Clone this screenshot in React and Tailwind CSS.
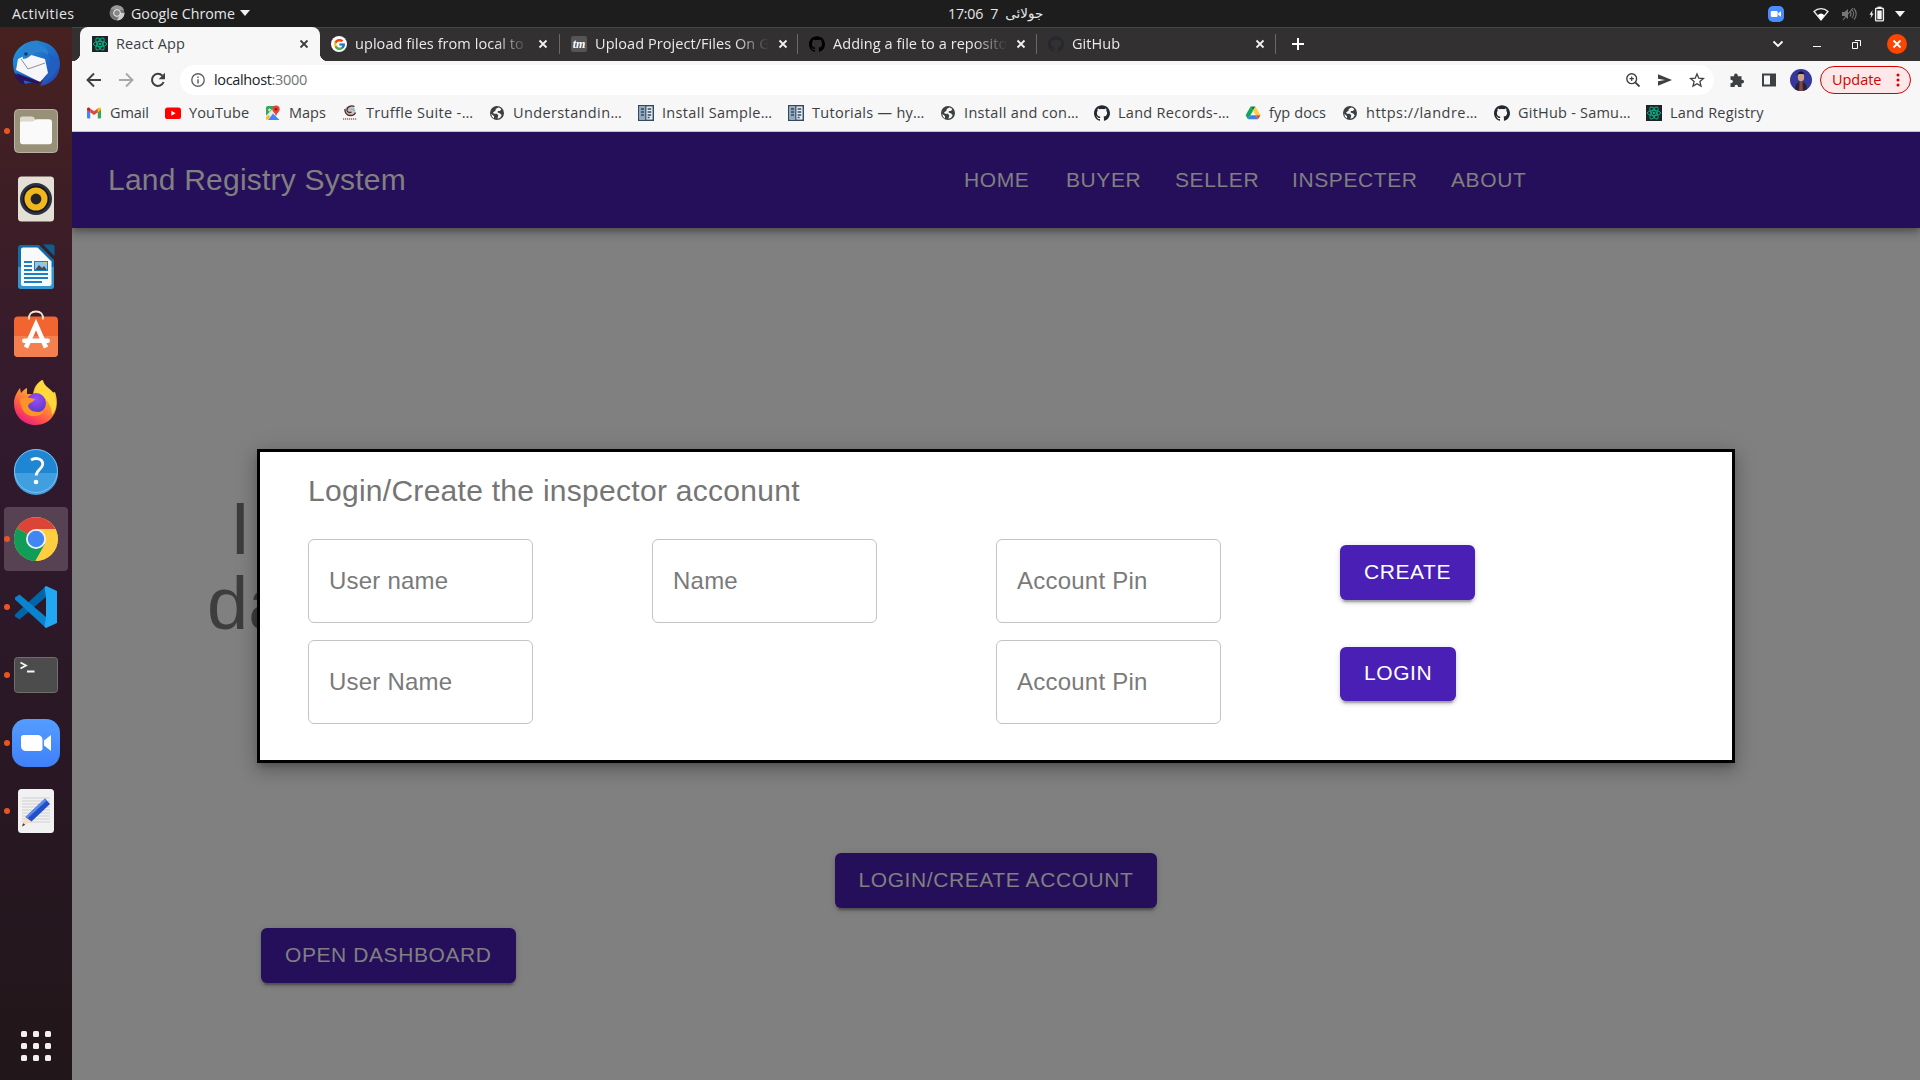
import React from "react";
import { SiGithub } from "react-icons/si";
import { FcGoogle } from "react-icons/fc";

const UI = "font-['Open_Sans','Noto_Sans',sans-serif]";

function ReactIcon() {
  return (
    <svg width="16" height="16" viewBox="0 0 16 16" className="shrink-0">
      <rect width="16" height="16" fill="#20232a" />
      <g fill="none" stroke="#06b184" strokeWidth="1">
        <ellipse cx="8" cy="8" rx="6.6" ry="2.6" />
        <ellipse cx="8" cy="8" rx="6.6" ry="2.6" transform="rotate(60 8 8)" />
        <ellipse cx="8" cy="8" rx="6.6" ry="2.6" transform="rotate(120 8 8)" />
      </g>
      <circle cx="8" cy="8" r="1.3" fill="#06b184" />
    </svg>
  );
}

function GmailIcon() {
  return (
    <svg width="16" height="16" viewBox="0 0 16 16" className="shrink-0">
      <path d="M1 4v8.6c0 .5.4.9.9.9h2.3V7.2z" fill="#4285f4" />
      <path d="M15 4v8.6c0 .5-.4.9-.9.9h-2.3V7.2z" fill="#34a853" />
      <path d="M11.8 3.4v3.8L15 4.8V3.900c0-1.300-1.400-1.900-2.400-1.200z" fill="#fbbc04" />
      <path d="M4.200 7.200V3.400L8 6.300l3.800-2.900v3.800L8 10.100z" fill="#ea4335" />
      <path d="M1 3.900v.9l3.200 2.400V3.400l-.8-.7C2.400 2 1 2.600 1 3.900z" fill="#c5221f" />
    </svg>
  );
}

function YoutubeIcon() {
  return (
    <svg width="16" height="16" viewBox="0 0 16 16" className="shrink-0">
      <rect x="0" y="2.500" width="16" height="11.500" rx="2.600" fill="#f00" />
      <path d="M6.400 5.800v4.900l4.200-2.450z" fill="#fff" />
    </svg>
  );
}

function MapsIcon() {
  return (
    <svg width="16" height="16" viewBox="0 0 16 16" className="shrink-0">
      <path d="M1 3a2 2 0 0 1 2-2h8L1 11z" fill="#34a853" />
      <path d="M1 13.500V11L11 1l3 2L2.500 15z" fill="#e8eaed" />
      <path d="M1 12.500 3.500 10 5 11.500 2 15c-.6-.2-1-.8-1-1.400z" fill="#fbbc04" />
      <path d="M8 8.500 14.500 15H3z" fill="#4285f4" />
      <path d="M11 .5a3.700 3.700 0 0 1 3.700 3.700C14.700 7 11.600 7.800 11.200 11h-.4C10.400 7.800 7.300 7 7.300 4.200A3.700 3.700 0 0 1 11 .5z" fill="#ea4335" />
      <circle cx="11" cy="4.200" r="1.300" fill="#8c1a12" />
      <path d="M6.200 4.500H4.500v1h.7c-.2.700-1.600.7-1.700-.5 0-1.100 1.100-1.300 1.600-.8" fill="none" stroke="#fff" strokeWidth=".8" />
    </svg>
  );
}

function TruffleIcon() {
  return (
    <svg width="16" height="16" viewBox="0 0 16 16" className="shrink-0">
      <circle cx="8" cy="5.800" r="5.400" fill="#cfc4c4" />
      <path d="M12.500 1.500C9 0 4.500 2 5 5.500c.3 2 3 2.500 4.500 1.500M3 4c-.5 3.500 2 6.500 5.500 6.500s4.500-1.500 5-3" fill="none" stroke="#4a2a2a" strokeWidth="1.300" />
      <path d="M8 4.500c1.500-1 4-.5 4.200 1.500" fill="none" stroke="#5fc9c0" strokeWidth="1.200" />
      <path d="M1 14h14" stroke="#a98a8e" strokeWidth="2" strokeDasharray="1.200 .8" />
    </svg>
  );
}

function GlobeIcon() {
  return (
    <svg width="16" height="16" viewBox="0 0 16 16" className="shrink-0">
      <circle cx="8" cy="8" r="7" fill="#3c4043" />
      <path d="M9.200 2.400 6.800 3.900 6.400 5.700 4 7.400l1 1.400h3l1.300 1.600-.9 3.300 2.700-.9 1.600-2.600-1.500-1.700L8.600 7.600l.3-1.500h1.900l1.500-1.600-1.200-1.400z" fill="#f7f7f7" />
      <path d="M2.300 8.800 5 11.200v2.200L3 11.800z" fill="#f7f7f7" />
    </svg>
  );
}

function DocsIcon() {
  return (
    <svg width="16" height="16" viewBox="0 0 16 16" className="shrink-0">
      <rect x=".7" y=".7" width="14.600" height="14.600" fill="#dfe9f0" stroke="#34495e" strokeWidth="1.400" />
      <rect x="1.400" y="1.400" width="6" height="13.200" fill="#8fa9bd" />
      <path d="M7.800 1v14" stroke="#34495e" strokeWidth="1.200" />
      <path d="M3 4h3M3 7h3M3 10h3M9.600 4h3.600M9.600 7h3.600M9.600 10h3.600M9.600 12.500h2" stroke="#34495e" strokeWidth="1.300" />
    </svg>
  );
}

function DriveIcon() {
  return (
    <svg width="16" height="16" viewBox="0 0 16 16" className="shrink-0">
      <path d="M5.600 1.500h4.800L8 5.700z" fill="#0d8038" />
      <path d="M5.600 1.500 .6 10.300 3 14.300 8 5.700z" fill="#0fa858" />
      <path d="M10.400 1.500 8 5.700l2.700 4.600h4.800z" fill="#ffcf3f" />
      <path d="M5.300 10.300h5.400L13 14.300H3z" fill="#3f7ee8" />
      <path d="M10.700 10.300h4.800L13 14.300z" fill="#ea4335" />
    </svg>
  );
}

function TmIcon() {
  return (
    <span className="flex h-4 w-4 shrink-0 items-center justify-center rounded-[2px] bg-[#555] font-['Liberation_Serif',serif] text-[12px] leading-none font-bold text-white italic">
      tm
    </span>
  );
}

function CloseX({ className }) {
  return (
    <svg width="10" height="10" viewBox="0 0 10 10" className={className}>
      <path d="M1.500 1.500l7 7M8.500 1.500l-7 7" stroke="currentColor" strokeWidth="1.800" />
    </svg>
  );
}

function Tab({ icon, title, cls }) {
  return (
    <div className={"relative -mt-px flex h-[34px] shrink-0 items-center pl-[11px] " + cls}>
      {icon}
      <span className="ml-2 w-[174px] overflow-hidden [mask-image:linear-gradient(to_right,#000_140px,transparent_174px)] text-[14.5px] tracking-[0.06px] whitespace-nowrap text-[#e8eaed]">
        {title}
      </span>
      <CloseX className="ml-[9px] shrink-0 text-[#f1f1f1]" />
      <i className="absolute top-[7px] right-0 h-5 w-px bg-[#6b6869]" />
    </div>
  );
}

const bookmarks = [
  ["Gmail", <GmailIcon />, "w-[79px]", "tracking-[-0.1px]"],
  ["YouTube", <YoutubeIcon />, "w-[100px]", "tracking-[0.1px]"],
  ["Maps", <MapsIcon />, "w-[77px]", ""],
  ["Truffle Suite -…", <TruffleIcon />, "w-[147px]", "tracking-[0.35px]"],
  ["Understandin…", <GlobeIcon />, "w-[149px]", "tracking-[0.38px]"],
  ["Install Sample…", <DocsIcon />, "w-[150px]", "tracking-[0.32px]"],
  ["Tutorials — hy…", <DocsIcon />, "w-[152px]", "tracking-[0.28px]"],
  ["Install and con…", <GlobeIcon />, "w-[154px]", "tracking-[0.33px]"],
  ["Land Records-…", <SiGithub size={16} color="#24292f" className="shrink-0" />, "w-[151px]", "tracking-[0.28px]"],
  ["fyp docs", <DriveIcon />, "w-[97px]", "tracking-[0.1px]"],
  ["https://landre…", <GlobeIcon />, "w-[152px]", "tracking-[0.5px]"],
  ["GitHub - Samu…", <SiGithub size={16} color="#24292f" className="shrink-0" />, "w-[152px]", "tracking-[0.22px]"],
  ["Land Registry", <ReactIcon />, "w-[130px]", "tracking-[0.2px]"],
];

function TopBar() {
  return (
    <div className="flex h-[27px] shrink-0 items-center bg-[#1d1d1d] text-[14.2px] text-[#e6e6e6]">
      <div className="flex w-[948px] items-center pl-3">
        <span className="w-[97px] tracking-[0.4px]">Activities</span>
        <svg width="16" height="16" viewBox="0 0 16 16">
          <circle cx="8" cy="8" r="7.500" fill="#777" />
          <path d="M8 8h7.500A7.500 7.500 0 0 1 8 15.500L11 9z" fill="#ccc" />
          <path d="M1.500 4A7.500 7.500 0 0 1 15 5H8z" fill="#999" />
          <circle cx="8" cy="8" r="3.400" fill="#888" stroke="#eee" strokeWidth="1" />
        </svg>
        <span className="ml-1.5 w-[109px] tracking-[0.05px] whitespace-nowrap">Google Chrome</span>
        <svg width="10" height="6" viewBox="0 0 10 6">
          <path d="M0 0h10L5 6z" fill="#f2f2f2" />
        </svg>
      </div>
      <div className="flex w-[820px] items-center gap-[7px] whitespace-nowrap">
        <span className="tracking-[-0.2px]">17:06</span>
        <span>7</span>
        <span dir="rtl" className="font-['DejaVu_Sans',sans-serif] text-[13.5px]">جولائی</span>
      </div>
      <div className="flex items-center">
        <svg width="16" height="16" viewBox="0 0 16 16">
          <rect width="16" height="16" rx="5" fill="#4a8cff" />
          <rect x="2.800" y="5" width="6.800" height="6" rx="1.200" fill="#fff" />
          <path d="M10.200 7.300 13 5.200v5.600l-2.800-2.100z" fill="#fff" />
        </svg>
        <svg width="16" height="14" viewBox="0 0 16 14" className="ml-[29px]">
          <path d="M1 4.500a10 10 0 0 1 14 0L8 13z" fill="none" stroke="#eee" strokeWidth="1.300" />
          <path d="M4.600 8.200a5 5 0 0 1 6.800 0L8 13z" fill="#fff" />
        </svg>
        <svg width="16" height="14" viewBox="0 0 16 14" className="ml-3">
          <path d="M1 5h2.500L7 2v10L3.500 9H1z" fill="#777" />
          <path d="M9 4.500a4 4 0 0 1 0 5M11 3a6 6 0 0 1 0 8M13 1.500a8 8 0 0 1 0 11M2 13 12 1" fill="none" stroke="#777" strokeWidth="1.100" />
        </svg>
        <svg width="16" height="16" viewBox="0 0 16 16" className="ml-3">
          <path d="M3.600 4 .5 8.700h1.800L1.500 12.500 4.600 7.600H2.900z" fill="#f2f2f2" />
          <rect x="6.600" y="2.300" width="7.800" height="12.600" rx="1" fill="none" stroke="#f2f2f2" strokeWidth="1.400" />
          <rect x="8.600" y=".6" width="3.800" height="1.600" fill="#f2f2f2" />
          <rect x="8.300" y="4.500" width="4.400" height="8.800" fill="#f2f2f2" />
        </svg>
        <svg width="10" height="6" viewBox="0 0 10 6" className="ml-[10px]">
          <path d="M0 0h10L5 6z" fill="#f2f2f2" />
        </svg>
      </div>
    </div>
  );
}

function Thunderbird() {
  return (
    <svg width="48" height="48" viewBox="0 0 48 48">
      <defs>
        <linearGradient id="tb" x1="0" y1="0" x2="1" y2="1">
          <stop offset="0" stopColor="#1f9be0" />
          <stop offset=".6" stopColor="#1f66c4" />
          <stop offset="1" stopColor="#2b3fae" />
        </linearGradient>
      </defs>
      <path d="M1 20C4 9 13 2 24 2c13 0 24 9 24 23 0 12-8 20-20 22l3-6L12 45C5 41 0 32 1 20z" fill="url(#tb)" />
      <path d="M2 34c1 5 5 10 11 12l-2-7z" fill="#2a1460" />
      <path d="M4 31 6 20l10-5 17 5 3 14-8 9z" fill="#f6f6f8" />
      <path d="m9 20 7 10 17-6" fill="none" stroke="#8f9096" strokeWidth="1" />
      <path d="M4 34l24 9-2 2-16-4z" fill="#2a1460" />
      <path d="M10 12C13 4 21 0 28 2l-5 3c8 0 14 5 13 11-5-4-10-4-15-1-4 2-5 5-10 5z" fill="#2a82cf" />
      <path d="M36 14c5 8 4 18-6 29 6-1 16-8 17-20z" fill="#1f5fc0" />
      <circle cx="14" cy="15" r="1.800" fill="#123a66" />
    </svg>
  );
}

function FilesIcon() {
  return (
    <svg width="48" height="48" viewBox="0 0 48 48">
      <rect x="2.500" y="2.500" width="43" height="43" rx="4" fill="#989079" stroke="#b9b3a2" strokeWidth="1" />
      <path d="M8 12c0-1.700 1-2.500 2.500-2.500h9c2 0 3 .8 3.700 3.200H36V18H8z" fill="#ddd9cd" />
      <path d="M8 16.500c0-1.300.8-2 2-2h10.500c2 0 2.500-2.200 4.500-2.200h12c1.800 0 3 1 3 2.700v19.500c0 1.700-1 2.700-2.700 2.700H10.700C9 37.200 8 36.200 8 34.500z" fill="#fafafa" />
    </svg>
  );
}

function RhythmboxIcon() {
  return (
    <svg width="48" height="48" viewBox="0 0 48 48">
      <rect x="6" y="1.500" width="36" height="45" rx="3.500" fill="#e4e0d6" />
      <circle cx="24" cy="24" r="16" fill="#2c3040" />
      <circle cx="24" cy="24" r="13.200" fill="#15171c" />
      <circle cx="24" cy="24" r="11.500" fill="#f0b81c" />
      <circle cx="24" cy="24" r="5.400" fill="#24262a" />
    </svg>
  );
}

function WriterIcon() {
  return (
    <svg width="48" height="48" viewBox="0 0 48 48">
      <path d="M9 2h18l15 15v26a3 3 0 0 1-3 3H9a3 3 0 0 1-3-3V5a3 3 0 0 1 3-3z" fill="#0f6ea6" />
      <path d="M6 24h36v19a3 3 0 0 1-3 3H9a3 3 0 0 1-3-3z" fill="#3596cf" />
      <path d="M31 1.500h9.500a2 2 0 0 1 2 2V13z" fill="#0c5f92" />
      <path d="M11 4.500h14.500L39.500 18.500V41a2 2 0 0 1-2 2H11a2 2 0 0 1-2-2V6.500a2 2 0 0 1 2-2z" fill="#f8f9fa" />
      <path d="M12 19h8M12 23h8M12 27h8M12 31h24M12 35h24M12 39h18" stroke="#1b7fc0" strokeWidth="2" />
      <rect x="22.500" y="18.500" width="13" height="9" fill="#8fc7ea" stroke="#1b7fc0" />
      <path d="m23 27 4-5 3 3 2-2 3 4z" fill="#4a4a4a" />
      <path d="M32 19h3v3z" fill="#f6c52c" />
    </svg>
  );
}

function SoftwareIcon() {
  return (
    <svg width="48" height="48" viewBox="0 0 48 48" className="overflow-visible">
      <path d="M2 9.500a4 4 0 0 1 4-4h36a4 4 0 0 1 4 4V42a4 4 0 0 1-4 4H6a4 4 0 0 1-4-4z" fill="#f26430" />
      <path d="M2 25h44v17a4 4 0 0 1-4 4H6a4 4 0 0 1-4-4z" fill="#f4804f" />
      <path d="M17 8.500C16.500 3 19.500.5 24 .5S31.500 3 31 8.500" fill="none" stroke="#fbe3c4" strokeWidth="1.800" />
      <path d="M14 36.500 24 13.500l10 23" fill="none" stroke="#fff" strokeWidth="4.600" />
      <rect x="10" y="27.500" width="28" height="4.600" rx="2.300" fill="#fff" />
    </svg>
  );
}

function FirefoxIcon() {
  return (
    <svg width="48" height="48" viewBox="0 0 48 48">
      <defs>
        <linearGradient id="ff" x1=".8" y1="0" x2=".2" y2="1">
          <stop offset="0" stopColor="#fff04a" />
          <stop offset=".4" stopColor="#ffa02e" />
          <stop offset=".75" stopColor="#ff4a50" />
          <stop offset="1" stopColor="#e3158c" />
        </linearGradient>
        <radialGradient id="fp" cx=".5" cy=".3" r=".7">
          <stop offset="0" stopColor="#9a4dff" />
          <stop offset="1" stopColor="#5a3cc0" />
        </radialGradient>
      </defs>
      <path d="M2 24c0-6 3-11 6-15l1 5c2-2 3-4 6-5l0 6h6c1-7 4-11 9-14 1 7 9 9 10 13l3-1c6 17-3 33-19 33C12 46 2 38 2 24z" fill="url(#ff)" />
      <path d="M22 14c2-7 5-11 9-13 1 7 9 9 11 14 3 8 3 14-2 21 0-10-5-18-18-22z" fill="#ffd83d" />
      <circle cx="24" cy="24" r="10" fill="url(#fp)" />
      <path d="M8 20c5-2 9-1 15 0-2 4-6 3-7 7 2 6 9 7 16 5-3 6-13 7-19 2-3-3-5-9-5-14z" fill="#ff9328" />
    </svg>
  );
}

function HelpIcon() {
  return (
    <svg width="48" height="48" viewBox="0 0 48 48">
      <circle cx="24" cy="24" r="22" fill="#1f86d4" />
      <path d="M2 26a22 22 0 0 0 44 0z" fill="#419fdf" />
      <circle cx="24" cy="24" r="21.500" fill="none" stroke="#7cc0ee" strokeWidth="1" />
      <path d="M19 13c4-2.500 12-2.200 11.700 4.300-.3 5-6.500 5.700-6.500 11.200" fill="none" stroke="#fff" strokeWidth="2.800" />
      <circle cx="24" cy="35" r="2.300" fill="#fff" />
    </svg>
  );
}

function ChromeIcon() {
  return (
    <svg width="48" height="48" viewBox="0 0 48 48">
      <circle cx="24" cy="24" r="22" fill="#fc4" />
      <path d="M24 24 5 13A22 22 0 0 1 43.300 14H24z" fill="#db4437" />
      <path d="M24 24 5 12.900A22 22 0 0 0 23.500 46L33 29z" fill="#0f9d58" />
      <path d="M24 14h19.300A22 22 0 0 1 23.500 46L33 29z" fill="#ffcd40" />
      <circle cx="24" cy="24" r="10" fill="#f1f1f1" />
      <circle cx="24" cy="24" r="8.200" fill="#4285f4" />
    </svg>
  );
}

function CodeIcon() {
  return (
    <svg width="48" height="48" viewBox="0 0 48 48">
      <path d="M3 31.500 34 3v11L7.500 36.500 3 33.500z" fill="#0065a9" />
      <path d="M3 16.500 34 45V34L7.500 11.500 3 14.500z" fill="#0a84cf" />
      <path d="M34 3l11 5v32l-11 5-1.500-1.500L34 34V14l-1.500-9.500z" fill="#23a7f2" />
    </svg>
  );
}

function TerminalIcon() {
  return (
    <svg width="48" height="48" viewBox="0 0 48 48">
      <rect x="2.500" y="6.500" width="43" height="35" rx="3" fill="#4c4c4c" stroke="#6f6f6f" />
      <path d="m8.500 11.500 5.500 3-5.500 3M15 20.500h7.500" fill="none" stroke="#f5f5f5" strokeWidth="1.800" />
    </svg>
  );
}

function ZoomIcon() {
  return (
    <svg width="48" height="48" viewBox="0 0 48 48">
      <defs>
        <linearGradient id="zm" x1="0" y1="0" x2="0" y2="1">
          <stop offset="0" stopColor="#559dff" />
          <stop offset="1" stopColor="#3f80fa" />
        </linearGradient>
      </defs>
      <rect width="48" height="48" rx="14" fill="url(#zm)" />
      <path d="M9 18.500C9 17 10 16 11.500 16H25c3.500 0 5.500 2 5.500 5v8.500c0 1.500-1 2.500-2.500 2.500H14.500c-3.500 0-5.500-2-5.500-5z" fill="#fff" />
      <path d="M32 21.500 39 16v16l-7-5.500z" fill="#fff" />
    </svg>
  );
}

function EditorIcon() {
  return (
    <svg width="48" height="48" viewBox="0 0 48 48">
      <rect x="6" y="2" width="36" height="44" rx="3.500" fill="#f1f1f1" />
      <path d="M10 11h28M10 14h28M10 17h28M10 20h28M10 23h28M10 26h28M10 29h28M10 32h28M10 35h28" stroke="#cfcfcf" strokeWidth="1" />
      <path d="M10 39.500 13.500 30l6 4.500z" fill="#fbdcc0" />
      <path d="m10 39.500 1.200-3.300 2 1.500z" fill="#333" />
      <path d="M13.500 30 33 11.500l5 5.500-18.500 17.500z" fill="#234fc4" />
      <path d="m13.500 30 19.500-18.500 1.800 1.900-19.500 18z" fill="#5b8af0" />
    </svg>
  );
}

const dock = [
  [<Thunderbird />, false],
  [<FilesIcon />, true],
  [<RhythmboxIcon />, false],
  [<WriterIcon />, false],
  [<SoftwareIcon />, false],
  [<FirefoxIcon />, false],
  [<HelpIcon />, false],
  [<ChromeIcon />, true, true],
  [<CodeIcon />, true],
  [<TerminalIcon />, true],
  [<ZoomIcon />, true],
  [<EditorIcon />, true],
];

function Dock() {
  return (
    <div className="flex w-[72px] shrink-0 flex-col items-center gap-1 bg-linear-to-b from-[#47211f] via-[#31192e] via-40% to-[#211619] pt-1">
      {dock.map(([icon, running, active], i) => (
        <div
          key={i}
          className={
            "relative flex h-16 w-16 shrink-0 items-center justify-center rounded-[4px] " +
            (active ? "bg-[#564252]" : "")
          }
        >
          {running && <i className="absolute top-[29px] left-0 h-1.5 w-1.5 rounded-full bg-[#e95420]" />}
          {icon}
        </div>
      ))}
      <div className="mt-auto mb-[19px] grid grid-cols-3 gap-1.5">
        {[0, 1, 2, 3, 4, 5, 6, 7, 8].map((n) => (
          <i key={n} className="h-1.5 w-1.5 rounded-[1.5px] bg-[#f2f0ee]" />
        ))}
      </div>
    </div>
  );
}

function TabStrip() {
  return (
    <div className="flex h-[34px] shrink-0 items-center border-t border-[#484647] bg-[#333031] pl-2">
      <div className="relative -mt-px flex h-[34px] w-[240px] shrink-0 items-center rounded-t-lg bg-[#f7f7f7] pl-3">
        <i className="absolute bottom-0 -left-2 h-2 w-2 bg-[radial-gradient(circle_at_0_0,transparent_8px,#f7f7f7_8.500px)]" />
        <i className="absolute -right-2 bottom-0 h-2 w-2 bg-[radial-gradient(circle_at_100%_0,transparent_8px,#f7f7f7_8.500px)]" />
        <ReactIcon />
        <span className="ml-2 w-[183px] text-[14.5px] tracking-[0.12px] text-[#3c4043]">React App</span>
        <CloseX className="shrink-0 text-[#3c4043]" />
      </div>
      <Tab
        cls="w-[240px]"
        icon={
          <span className="flex h-4 w-4 shrink-0 items-center justify-center rounded-full bg-white">
            <FcGoogle size={13} />
          </span>
        }
        title="upload files from local to gith"
      />
      <Tab cls="w-[238px]" icon={<TmIcon />} title="Upload Project/Files On Gith" />
      <Tab cls="w-[239px]" icon={<SiGithub size={16} color="#000" className="shrink-0" />} title="Adding a file to a repository" />
      <Tab cls="w-[239px]" icon={<SiGithub size={16} color="#24292f" className="shrink-0" />} title="GitHub" />
      <svg width="12" height="12" viewBox="0 0 12 12" className="-mt-px ml-4">
        <path d="M6 0v12M0 6h12" stroke="#fff" strokeWidth="2" />
      </svg>
      <div className="-mt-px mr-[13px] ml-auto flex items-center">
        <svg width="12" height="8" viewBox="0 0 12 8" className="mr-[29px]">
          <path d="m1.500 1.500 4.500 4.500 4.500-4.500" fill="none" stroke="#fff" strokeWidth="1.800" />
        </svg>
        <i className="mt-[5px] mr-8 h-px w-2 bg-white" />
        <svg width="9" height="9" viewBox="0 0 9 9" className="mr-[26px] -ml-px">
          <path d="M.5 2.500h5v6h-5zM3 .5h5.500v5.500" fill="none" stroke="#fff" strokeWidth="1" />
        </svg>
        <span className="flex h-5 w-5 items-center justify-center rounded-full bg-[#fc4600]">
          <CloseX className="text-white" />
        </span>
      </div>
    </div>
  );
}

function Toolbar() {
  return (
    <div className="flex h-[38px] shrink-0 items-center bg-[#f7f7f7] pl-[14px]">
      <svg width="16" height="16" viewBox="0 0 16 16">
        <path d="M15 8H2M8 1.500 1.500 8 8 14.500" fill="none" stroke="#3c4043" strokeWidth="1.900" />
      </svg>
      <svg width="16" height="16" viewBox="0 0 16 16" className="ml-4">
        <path d="M1 8h13M8 1.500 14.500 8 8 14.500" fill="none" stroke="#a8a8aa" strokeWidth="1.900" />
      </svg>
      <svg width="16" height="16" viewBox="0 0 16 16" className="ml-4">
        <path d="M13.600 10a6 6 0 1 1-1.200-6.200" fill="none" stroke="#3c4043" strokeWidth="2" />
        <path d="M15 .8v6.400H8.600z" fill="#3c4043" />
      </svg>
      <div className="ml-[14px] flex h-[30px] w-[1534px] shrink-0 items-center rounded-full bg-white pl-[11px]">
        <svg width="14" height="14" viewBox="0 0 14 14">
          <circle cx="7" cy="7" r="6.200" fill="none" stroke="#5f6368" strokeWidth="1.400" />
          <path d="M7 6.200v4.300M7 3.400v1.600" stroke="#5f6368" strokeWidth="1.500" />
        </svg>
        <span className="ml-[9px] text-[14.5px] tracking-[-0.35px] text-[#202124]">
          localhost<span className="text-[#6f7377]">:3000</span>
        </span>
        <svg width="16" height="16" viewBox="0 0 16 16" className="ml-auto">
          <circle cx="6.700" cy="6.700" r="4.900" fill="none" stroke="#3c4043" strokeWidth="1.400" />
          <path d="M10.300 10.300 14.500 14.500" stroke="#3c4043" strokeWidth="1.800" />
          <path d="M6.700 4.500v4.400M4.500 6.700h4.400" stroke="#3c4043" strokeWidth="1.200" />
        </svg>
        <svg width="16" height="16" viewBox="0 0 16 16" className="ml-4">
          <path d="M1 2.200 15 8 1 13.800V9.300L8 8 1 6.700z" fill="#3c4043" />
        </svg>
        <svg width="16" height="16" viewBox="0 0 16 16" className="mr-[9px] ml-4">
          <path d="m8 2 1.800 4.200 4.600.4-3.500 3 1.100 4.500L8 11.700l-4 2.400 1.100-4.500-3.500-3 4.600-.4z" fill="none" stroke="#3c4043" strokeWidth="1.300" />
        </svg>
      </div>
      <svg width="16" height="16" viewBox="0 0 16 16" className="ml-[15px]">
        <path d="M1.500 4.200h3.600c-.6-3.600 4.200-3.600 3.700 0h3.700v3.600c3.400-.5 3.400 4.200 0 3.700v3.500H9c.3-3-3.600-3-3.400 0H1.500v-3.800c3.200 0 3.200-3.600 0-3.500z" fill="#3c4043" />
      </svg>
      <svg width="16" height="16" viewBox="0 0 16 16" className="ml-4">
        <path d="M1 1.500h14v13H1zM3 3.500v9h6v-9z" fill="#3c4043" fillRule="evenodd" />
      </svg>
      <svg width="22" height="22" viewBox="0 0 22 22" className="ml-[13px] rounded-full">
        <rect width="22" height="22" fill="#34389a" />
        <path d="M5 22c0-7 2-9 6-9s6 2 6 9z" fill="#2a2030" />
        <path d="M9.500 13h3l.5 9H9z" fill="#7c4a43" />
        <ellipse cx="11" cy="8" rx="3.200" ry="4.400" fill="#d0a08c" />
        <path d="M7.500 6.500c0-5.500 7-5.500 7 0l-1-1.500H8.800z" fill="#17141c" />
      </svg>
      <div className="ml-2 flex h-7 w-[91px] items-center rounded-full border border-[#d40000] bg-[#fce8e8] pl-[11px] text-[14.5px] text-[#d40000]">
        <span className="w-[64px] tracking-[-0.05px]">Update</span>
        <svg width="4" height="14" viewBox="0 0 4 14">
          <circle cx="2" cy="2" r="1.500" fill="#d40000" />
          <circle cx="2" cy="7" r="1.500" fill="#d40000" />
          <circle cx="2" cy="12" r="1.500" fill="#d40000" />
        </svg>
      </div>
    </div>
  );
}

function Bookmarks() {
  return (
    <div className="flex h-[33px] shrink-0 border-b border-[#c3c1c9] bg-[#f7f7f7] pb-1 pl-[14px]">
      {bookmarks.map(([label, icon, w, tr]) => (
        <div key={label} className={"flex shrink-0 items-center gap-2 text-[14.5px] whitespace-nowrap text-[#3c4043] " + w + " " + tr}>
          {icon}
          {label}
        </div>
      ))}
    </div>
  );
}

const btn =
  "flex h-[55px] items-center rounded-[6px] px-6 pb-0.5 text-[21px] tracking-[0.58px] whitespace-nowrap shadow-[0_4.5px_1.5px_-3px_rgba(0,0,0,0.2),0_3px_3px_rgba(0,0,0,0.14),0_1.5px_7.500px_rgba(0,0,0,0.12)] ";

function Field({ label }) {
  return (
    <div className="flex h-[84px] w-[225px] items-center rounded-[6px] border border-[#c4c4c4] pl-5 text-[24px] tracking-[0.225px] text-[#7a7a7a]">
      {label}
    </div>
  );
}

function Modal() {
  return (
    <div className="absolute top-[317px] left-[185px] h-[314px] w-[1478px] border-3 border-black bg-white px-12 pt-[15px] shadow-[0_5px_6px_-2px_rgba(0,0,0,0.2),0_8px_15px_1px_rgba(0,0,0,0.14),0_3px_21px_3px_rgba(0,0,0,0.12)]">
      <h2 className="h-[48px] text-[30px] leading-[48px] tracking-[0.28px] text-[#757575]">
        Login/Create the inspector acconunt
      </h2>
      <div className="mt-6 grid grid-cols-[344px_344px_344px_344px] gap-y-[17px]">
        <Field label="User name" />
        <Field label="Name" />
        <Field label="Account Pin" />
        <div className="flex items-start pt-1.5">
          <div className={btn + "bg-[#4a1fb5] text-white"}>CREATE</div>
        </div>
        <Field label="User Name" />
        <span />
        <Field label="Account Pin" />
        <div className="flex items-start pt-[7px]">
          <div className={btn + "max-h-[54px] bg-[#4a1fb5] text-white"}>LOGIN</div>
        </div>
      </div>
    </div>
  );
}

function Page() {
  return (
    <div className="relative flex min-h-0 flex-1 flex-col overflow-hidden bg-[#808080] font-['Liberation_Sans',Arial,sans-serif]">
      <header className="relative flex h-24 shrink-0 items-center bg-[#260f5a] pl-9 text-[#808080] shadow-[0_3px_6px_-1px_rgba(0,0,0,0.25),0_6px_8px_rgba(0,0,0,0.14),0_1px_15px_rgba(0,0,0,0.12)]">
        <span className="w-[856px] pb-0.5 text-[30px] tracking-[0.225px]">Land Registry System</span>
        <nav className="flex text-[21px] tracking-[0.6px]">
          <span className="w-[102px]">HOME</span>
          <span className="w-[109px]">BUYER</span>
          <span className="w-[117px]">SELLER</span>
          <span className="w-[159px]">INSPECTER</span>
          <span>ABOUT</span>
        </nav>
      </header>
      <div className="mt-[264px] ml-[135px] h-[361px] shrink-0 text-[74px] leading-[74.5px] text-[#3d3d3d]">
        <p className="pl-[23px]">I</p>
        <p>da</p>
      </div>
      <div className="flex justify-center">
        <div className={btn + "bg-[#260f5a] text-[#808080]"}>LOGIN/CREATE ACCOUNT</div>
      </div>
      <div className="mt-5 ml-[189px] flex">
        <div className={btn + "bg-[#260f5a] text-[#808080]"}>OPEN DASHBOARD</div>
      </div>
      <Modal />
    </div>
  );
}

export default function App() {
  return (
    <div className={"flex h-[1080px] w-[1920px] flex-col overflow-hidden bg-[#1d1d1d] " + UI}>
      <TopBar />
      <div className="flex min-h-0 flex-1">
        <Dock />
        <div className="flex min-w-0 flex-1 flex-col">
          <TabStrip />
          <Toolbar />
          <Bookmarks />
          <Page />
        </div>
      </div>
    </div>
  );
}
